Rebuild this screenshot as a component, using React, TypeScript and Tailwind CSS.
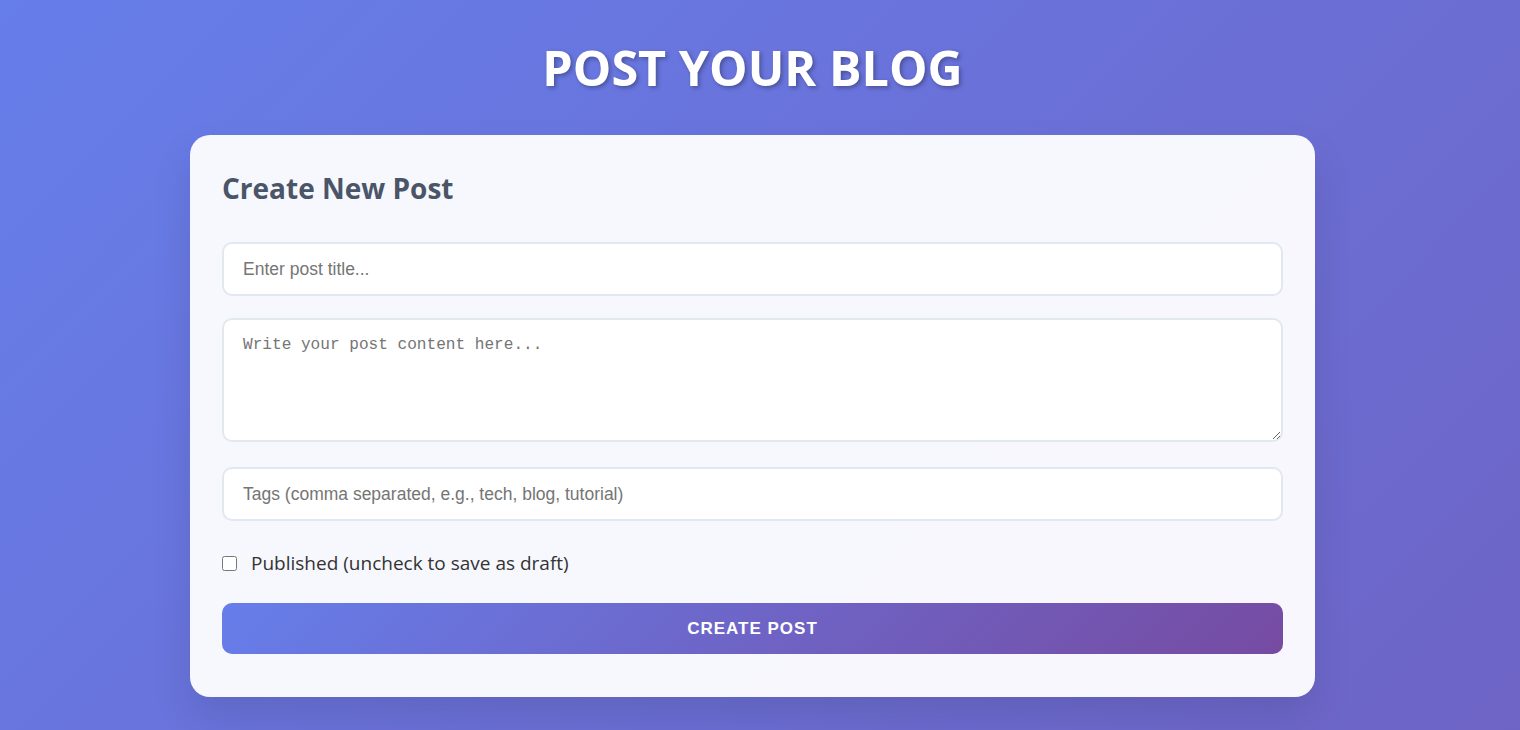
import { useState } from 'react'

export default function App() {
  const [published, setPublished] = useState(false)

  return (
    <main className="min-h-screen bg-[linear-gradient(135deg,#667eea_0%,#6e64c6_100%)] pr-[15px] pt-[38px] pb-10 font-['Open_Sans',sans-serif]">
      <h1 className="text-center text-[48.5px] leading-[58px] font-bold text-white [text-shadow:2px_2px_4px_rgba(0,0,0,0.3)]">
        POST YOUR BLOG
      </h1>

      {/* Create form card */}
      <section className="mx-auto mt-[39px] w-[1125px] rounded-[20px] bg-white/95 px-8 pt-[31px] pb-[43px] shadow-[0_20px_40px_rgba(0,0,0,0.1)]">
        <h2 className="mb-[32px] text-[28px] leading-[44px] font-bold text-[#4a5568]">Create New Post</h2>

        <form className="flex flex-col" onSubmit={(e) => e.preventDefault()}>
          <input
            type="text"
            placeholder="Enter post title..."
            className="h-[54px] w-full rounded-[10px] border-2 border-[#e2e8f0] bg-white px-[19px] font-['Liberation_Sans',Arial,sans-serif] text-[17.5px] text-[#333] outline-none placeholder:text-[#757575]"
          />

          <textarea
            placeholder="Write your post content here..."
            className="mt-[22px] h-[124px] w-full resize-y rounded-[10px] border-2 border-[#e2e8f0] bg-white px-[19px] pt-[15px] pb-[13px] font-['Liberation_Mono',monospace] text-[16.1px] leading-[20px] text-[#333] outline-none placeholder:text-[#757575]"
          />

          <input
            type="text"
            placeholder="Tags (comma separated, e.g., tech, blog, tutorial)"
            className="mt-[25px] h-[54px] w-full rounded-[10px] border-2 border-[#e2e8f0] bg-white px-[19px] font-['Liberation_Sans',Arial,sans-serif] text-[17.5px] text-[#333] outline-none placeholder:text-[#757575]"
          />

          <label className="mt-[30px] flex items-center gap-[14px] text-[19px] leading-[24px] text-[#333]">
            <input
              type="checkbox"
              checked={published}
              onChange={(e) => setPublished(e.target.checked)}
              className="m-0 h-[15px] w-[15px]"
            />
            Published (uncheck to save as draft)
          </label>

          <button
            type="submit"
            className="mt-[28px] h-[51px] w-full rounded-[10px] bg-[linear-gradient(135deg,#667eea_0%,#764ba2_100%)] font-['Liberation_Sans',Arial,sans-serif] text-[17px] font-bold tracking-[1px] text-white uppercase"
          >
            Create Post
          </button>
        </form>
      </section>
    </main>
  )
}
